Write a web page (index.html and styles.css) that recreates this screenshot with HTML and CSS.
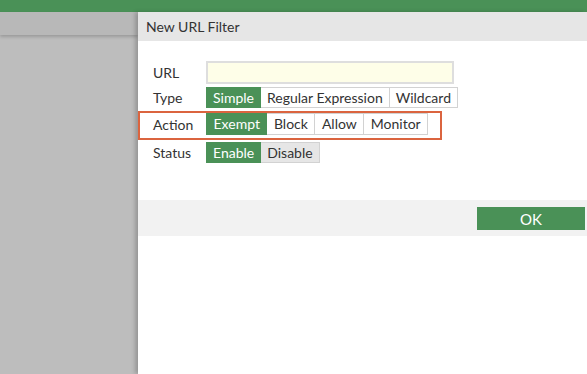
FILE: index.html
```html
<!DOCTYPE html>
<html lang="en">
<head>
    <meta charset="UTF-8">
    <title>New URL Filter</title>
    <link rel="stylesheet" href="styles.css">
</head>
<body>
    <div class="top-bar"></div>

    <div class="workspace">
        <div class="side">
            <div class="side-strip"></div>
        </div>

        <div class="dialog">
            <div class="dialog-title">New URL Filter</div>

            <div class="dialog-body">
                <div class="form-row">
                    <label class="field-label">URL</label>
                    <input type="text" class="url-input">
                </div>

                <div class="form-row">
                    <span class="field-label">Type</span>
                    <div class="btn-group">
                        <span class="opt selected">Simple</span>
                        <span class="opt">Regular Expression</span>
                        <span class="opt">Wildcard</span>
                    </div>
                </div>

                <!-- highlighted row -->
                <div class="form-row highlight">
                    <span class="field-label">Action</span>
                    <div class="btn-group">
                        <span class="opt selected">Exempt</span>
                        <span class="opt">Block</span>
                        <span class="opt">Allow</span>
                        <span class="opt">Monitor</span>
                    </div>
                </div>

                <div class="form-row">
                    <span class="field-label">Status</span>
                    <div class="btn-group">
                        <span class="opt selected">Enable</span>
                        <span class="opt off">Disable</span>
                    </div>
                </div>
            </div>

            <div class="dialog-footer">
                <button class="ok-btn">OK</button>
            </div>
        </div>
    </div>
</body>
</html>
```

FILE: styles.css
```css
body {
    margin: 0;
    font-family: Lato, 'Liberation Sans', sans-serif;
    font-size: 14px;
    color: #333;
    height: 374px;
    overflow: hidden;
    display: flex;
    flex-direction: column;
}

.top-bar {
    height: 12px;
    background-color: #4a9157;
}

.workspace {
    flex: 1;
    display: flex;
}

.side {
    width: 138px;
    background-color: #bdbdbd;
}

.side-strip {
    height: 23px;
    background-color: #b8b8b8;
    box-shadow: 0 2px 3px rgba(0, 0, 0, 0.18);
}

.dialog {
    flex: 1;
    background-color: #fff;
    display: flex;
    flex-direction: column;
    box-shadow: -3px 0 4px rgba(0, 0, 0, 0.2);
    position: relative;
}

.dialog-title {
    height: 29px;
    line-height: 29px;
    padding-left: 8px;
    background-color: #e6e6e6;
    font-size: 14px;
    color: #333;
}

.dialog-body {
    height: 139px;
    padding-top: 20px;
    display: flex;
    flex-direction: column;
    gap: 3px;
}

.form-row {
    display: flex;
    align-items: center;
    padding-left: 15px;
}

.field-label {
    width: 53px;
}

.url-input {
    width: 240px;
    height: 19px;
    margin: 0;
    padding: 0 2px;
    border: 2px solid #dedede;
    background-color: #fefee8;
    font-family: inherit;
}

.btn-group {
    display: flex;
}

.opt {
    line-height: 19px;
    padding: 0 6px;
    border: 1px solid #d2d2d2;
    border-left: none;
    background-color: #fff;
    color: #333;
}

.opt:first-child {
    border-left: 1px solid #d2d2d2;
}

.opt.selected {
    background-color: #4a9157;
    border-color: #4a9157;
    color: #fff;
}

.opt.off {
    background-color: #e6e6e6;
}

.form-row.highlight {
    align-self: flex-start;
    padding: 0 12px 3px 13px;
    margin-bottom: -1px;
    border: 2px solid #db643f;
}

.form-row.highlight .opt {
    line-height: 20px;
    padding: 0 6.5px;
}

.dialog-footer {
    height: 36px;
    background-color: #f2f2f2;
    display: flex;
    justify-content: flex-end;
    align-items: flex-start;
    padding-top: 7px;
    box-sizing: border-box;
    padding-right: 2px;
}

.ok-btn {
    width: 108px;
    height: 23px;
    border: none;
    background-color: #4a9157;
    color: #fff;
    font-family: inherit;
    font-size: 15px;
}
```
